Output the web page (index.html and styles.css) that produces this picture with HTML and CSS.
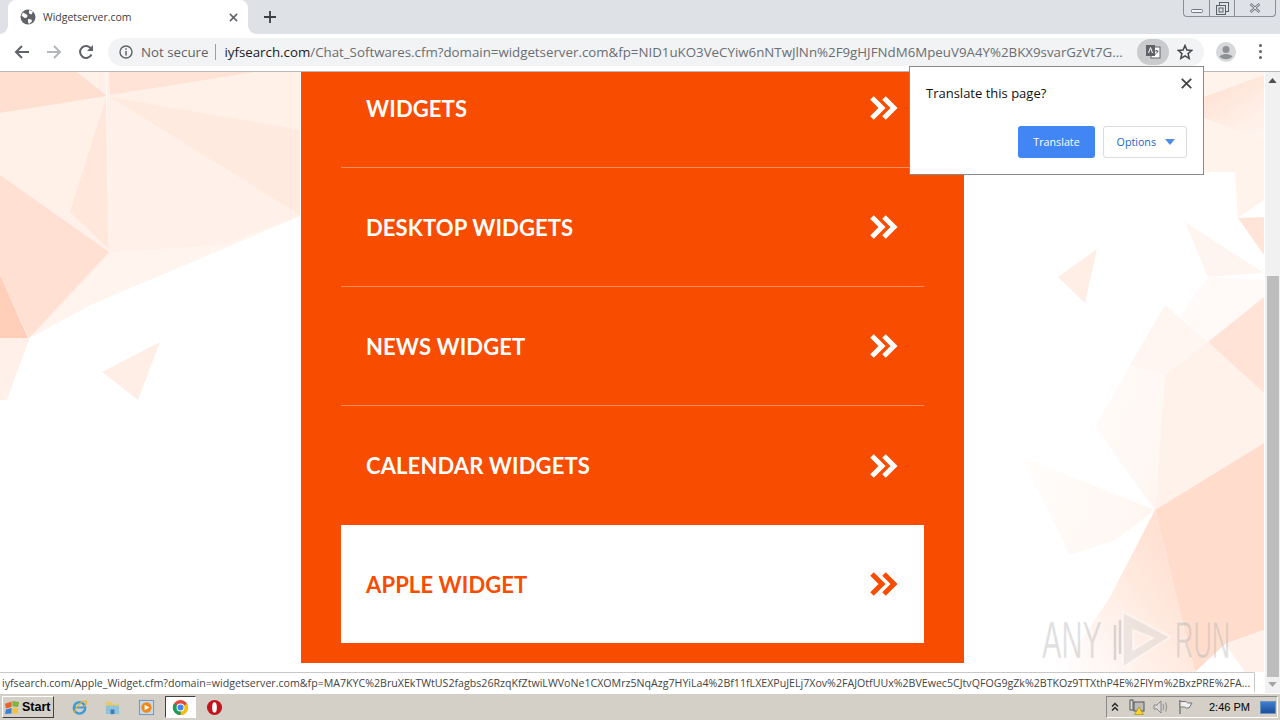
FILE: index.html
```html
<!DOCTYPE html>
<html lang="en">
<head>
<meta charset="utf-8">
<title>Widgetserver.com</title>
<link rel="stylesheet" href="styles.css">
</head>
<body>
<header class="browser">
  <div class="tabstrip">
    <div class="tab">
      <svg class="favicon" viewBox="0 0 16 16"><circle cx="8" cy="8" r="7.5" fill="#5f6368"/><path d="M3 3.500 7.500 6 7 8.500 4.500 9 1.500 6.500ZM9 1l4 1.500-1.500 3L9 4.500ZM8 10l3.500.5L12 12.500 9 15l-1-2Z" fill="#fff"/></svg>
      <span class="tab-title">Widgetserver.com</span>
      <svg class="tab-close" viewBox="0 0 10 10"><path d="M1 1l8 8M9 1l-8 8" stroke="#5f6368" stroke-width="1.700"/></svg>
    </div>
    <svg class="newtab" viewBox="0 0 12 12"><path d="M6 0v12M0 6h12" stroke="#3c4043" stroke-width="1.800"/></svg>
    <div class="winbtns">
      <span class="winbtn min"><svg viewBox="0 0 12 4" class="w-min"><rect x=".5" y=".5" width="11" height="3" rx="1" fill="#f4f5f7" stroke="#707680"/></svg></span>
      <span class="winbtn mid"><svg viewBox="0 0 13 13" class="w-max"><rect x="3.500" y=".5" width="9" height="9" fill="none" stroke="#5c6068"/><rect x=".5" y="3.500" width="9" height="9" fill="#dee1e6" stroke="#5c6068"/><rect x="3" y="6" width="4" height="4" fill="none" stroke="#5c6068"/></svg></span>
      <span class="winbtn close"><svg viewBox="0 0 12 10" class="w-close"><path d="M1.500 1l9 8M10.500 1l-9 8" stroke="#6d727a" stroke-width="2.400"/><path d="M1.500 1l9 8M10.500 1l-9 8" stroke="#e8eaed" stroke-width="1"/></svg></span>
    </div>
  </div>
  <div class="toolbar">
    <svg class="nav" viewBox="0 0 16 16"><path d="M15 8H2M8 2 2 8l6 6" fill="none" stroke="#5f6368" stroke-width="2"/></svg>
    <svg class="nav" viewBox="0 0 16 16"><path d="M1 8h13M8 2l6 6-6 6" fill="none" stroke="#b4b7bb" stroke-width="2"/></svg>
    <svg class="nav" viewBox="0 0 16 16"><path d="M13.500 10.500A6 6 0 1 1 13 4.500" fill="none" stroke="#5f6368" stroke-width="2"/><path d="M15 1v6H9z" fill="#5f6368"/></svg>
    <div class="omnibox">
      <svg class="info" viewBox="0 0 14 14"><circle cx="7" cy="7" r="6" fill="none" stroke="#5f6368" stroke-width="1.400"/><path d="M7 6v4.500M7 3.300v1.500" stroke="#5f6368" stroke-width="1.500"/></svg>
      <span class="secure">Not secure</span>
      <span class="pipe"></span>
      <span class="url"><b>iyfsearch.com</b>/Chat_Softwares.cfm?domain=widgetserver.com&amp;fp=NID1uKO3VeCYiw6nNTwJlNn%2F9gHJFNdM6MpeuV9A4Y%2BKX9svarGzVt7G...</span>
      <span class="translate-ico"><svg viewBox="0 0 16 16"><rect x="6" y="3" width="9" height="11" fill="#fff" stroke="#5f6368"/><rect x="1" y="1" width="9" height="11" fill="#5f6368"/><path d="M3.500 9 5.500 3.500 7.500 9" fill="none" stroke="#fff"/><path d="M9.500 7h4M11.500 6v1M12.500 7c-.3 2-1.500 3-3 3.500" fill="none" stroke="#5f6368"/></svg></span>
      <svg class="star" viewBox="0 0 16 16"><path d="M8 1.500 9.900 6 14.800 6.400 11.100 9.600 12.200 14.400 8 11.900 3.800 14.400 4.900 9.600 1.200 6.400 6.100 6Z" fill="none" stroke="#44474b" stroke-width="1.500"/></svg>
    </div>
    <span class="avatar"><svg viewBox="0 0 20 20"><circle cx="10" cy="10" r="10" fill="#d7d8da"/><circle cx="10" cy="7.500" r="3.500" fill="#8d9094"/><path d="M3.500 14.500c2-3.500 11-3.500 13 0-3 3.500-10 3.500-13 0Z" fill="#8d9094"/></svg></span>
    <span class="kebab"><i></i><i></i><i></i></span>
  </div>
</header>

<main class="viewport">
  <div class="page">
    <svg class="decor" viewBox="0 0 1265 601" aria-hidden="true">
      <defs>
        <linearGradient id="fadeA" gradientUnits="userSpaceOnUse" x1="1060" y1="672" x2="1185" y2="590">
          <stop offset="0" stop-color="#fff" /><stop offset="1" stop-color="#ffe2d4"/>
        </linearGradient>
        <linearGradient id="fadeB" gradientUnits="userSpaceOnUse" x1="1022" y1="457" x2="1155" y2="510">
          <stop offset="0" stop-color="#fffdfb"/><stop offset="1" stop-color="#fff6f1"/>
        </linearGradient>
        <linearGradient id="fadeC" gradientUnits="userSpaceOnUse" x1="1204" y1="95" x2="1240" y2="150">
          <stop offset="0" stop-color="#ffe3d6"/><stop offset="1" stop-color="#fff5ef"/>
        </linearGradient>
      </defs>
      <g transform="translate(0 -72)">
        <polygon fill="#fff1e9" points="0,72 300,72 300,216 220,250 90,305 30,337 7,400 0,400"/>
        <polygon fill="#fedfd0" points="0,72 77,72 107,96 0,113"/>
        <polygon fill="#fff0e8" points="77,72 105,72 107,95"/>
        <polygon fill="#fee3d6" points="109,72 255,72 110,95"/>
        <polygon fill="#fff0e8" points="110,97 300,130 300,72 255,72"/>
        <polygon fill="#ffeadf" points="110,97 300,130 300,215"/>
        <polygon fill="#fff0e8" points="0,113 106,98 72,215 0,175"/>
        <polygon fill="#ffe7db" points="106,98 110,250 70,212"/>
        <polygon fill="#ffe0d2" points="0,175 109,252 29,338 0,275"/>
        <polygon fill="#ffcfba" points="0,275 28,338 0,338"/>
        <polygon fill="#fff4ee" points="112,252 220,245 300,216 220,250 90,305 32,337"/>
        <polygon fill="#ffeee6" points="160,342 102,372 138,400"/>
        <polyline fill="none" stroke="#fff" stroke-opacity=".6" points="106,72 109,252"/>

        <polygon fill="#fff3ec" points="1204,72 1264,72 1264,200 1238,218 1235,172 1204,172"/>
        <polygon fill="url(#fadeC)" points="1204,97 1264,75 1264,140 1204,118"/>
        <polygon fill="#ffeee6" points="1058,277 1097,249 1085,303"/>
        <polygon fill="#fff5f0" points="1185,222 1208,277 1264,273"/>
        <polygon fill="#ffe4d7" points="1238,218 1264,217 1264,255"/>
        <polygon fill="#fffaf7" points="1208,277 1264,280 1264,297 1208,342 1180,316"/>
        <polygon fill="#fff6f1" points="1165,305 1208,342 1165,375 1130,365"/>
        <polygon fill="url(#fadeB)" points="1095,427 1130,365 1165,375 1155,510"/>
        <polygon fill="#fff2eb" points="1165,375 1208,342 1264,393 1264,443 1155,510"/>
        <polygon fill="#ffe3d6" points="1208,342 1264,297 1264,393"/>
        <polygon fill="url(#fadeB)" points="1022,457 1155,510 1115,540 1070,555"/>
        <polygon fill="#ffdccb" points="1155,510 1264,443 1264,630 1225,644 1195,672"/>
        <polygon fill="url(#fadeA)" points="1155,510 1195,672 1060,672 1110,597"/>
        <polygon fill="#fff1ea" points="1264,630 1225,644 1245,672 1264,672"/>
      </g>
    </svg>
    <nav class="panel">
      <a class="row"><span>WIDGETS</span><svg class="chev" viewBox="0 0 30 26"><path d="M3 3 13 13 3 23M15 3 25 13 15 23" fill="none" stroke="currentColor" stroke-width="5"/></svg></a>
      <a class="row"><span>DESKTOP WIDGETS</span><svg class="chev" viewBox="0 0 30 26"><path d="M3 3 13 13 3 23M15 3 25 13 15 23" fill="none" stroke="currentColor" stroke-width="5"/></svg></a>
      <a class="row"><span>NEWS WIDGET</span><svg class="chev" viewBox="0 0 30 26"><path d="M3 3 13 13 3 23M15 3 25 13 15 23" fill="none" stroke="currentColor" stroke-width="5"/></svg></a>
      <a class="row"><span>CALENDAR WIDGETS</span><svg class="chev" viewBox="0 0 30 26"><path d="M3 3 13 13 3 23M15 3 25 13 15 23" fill="none" stroke="currentColor" stroke-width="5"/></svg></a>
      <a class="row active"><span>APPLE WIDGET</span><svg class="chev" viewBox="0 0 30 26"><path d="M3 3 13 13 3 23M15 3 25 13 15 23" fill="none" stroke="currentColor" stroke-width="5"/></svg></a>
    </nav>
  </div>
  <div class="scrollbar">
    <svg class="arrow" viewBox="0 0 10 6"><path d="M5 0 10 6H0Z" fill="#505050"/></svg>
    <div class="thumb"></div>
    <svg class="arrow" viewBox="0 0 10 6"><path d="M5 6 10 0H0Z" fill="#a3a3a3"/></svg>
  </div>

  <div class="watermark">
    <span class="wm-text wm-any">ANY</span>
    <svg class="wm-logo" viewBox="0 0 60 64"><path d="M5 17V52M10 12V46" fill="none" stroke="#b4b4b4" stroke-opacity=".5" stroke-width="2.500"/><path d="M13 4 60 29 13 59ZM23 22 43 30 23 42Z" fill="#c8c8c8" fill-opacity=".3" fill-rule="evenodd" stroke="#fff" stroke-opacity=".5" stroke-width="2"/></svg>
    <span class="wm-text wm-run">RUN</span>
  </div>

  <aside class="bubble">
    <p class="bubble-title">Translate this page?</p>
    <svg class="bubble-close" viewBox="0 0 10 10"><path d="M.7.7l8.600 8.600M9.300.7.7 9.300" stroke="#444" stroke-width="1.600"/></svg>
    <div class="bubble-actions">
      <button class="btn primary">Translate</button>
      <button class="btn secondary">Options<i class="caret"></i></button>
    </div>
  </aside>

  <div class="status">iyfsearch.com/Apple_Widget.cfm?domain=widgetserver.com&amp;fp=MA7KYC%2BruXEkTWtUS2fagbs26RzqKfZtwiLWVoNe1CXOMrz5NqAzg7HYiLa4%2Bf11fLXEXPuJELj7Xov%2FAJOtfUUx%2BVEwec5CJtvQFOG9gZk%2BTKOz9TTXthP4E%2FlYm%2BxzPRE%2FA...</div>
</main>

<footer class="taskbar">
  <button class="start">
    <svg viewBox="0 0 18 16" class="start-flag"><path d="M1 4 8 1.500V7.500L2 9Z" fill="#e8632a"/><path d="M9 1 16 2 15 7.500 9 7Z" fill="#7fb43c"/><path d="M2 10 8 8.500V14.500L1 15Z" fill="#3b82d6"/><path d="M9 8.500 15 9 14.500 14.500 9 14Z" fill="#f2c230"/></svg>
    <span>Start</span>
  </button>
  <div class="quick">
    <span class="app"><svg viewBox="0 0 18 18"><circle cx="9" cy="9.500" r="6" fill="none" stroke="#3c9ad8" stroke-width="2.600"/><path d="M4 9h11" stroke="#3c9ad8" stroke-width="2"/><path d="M3 15C6 6 13 1 16 2c1.500 1 0 4-2 6" fill="none" stroke="#e6b530" stroke-width="1.300"/></svg></span>
    <span class="app"><svg viewBox="0 0 18 18"><path d="M2 3h6l1 2h7v11H2Z" fill="#e9c868"/><rect x="2" y="7" width="14" height="9" fill="#8fc3dc"/><rect x="7" y="11" width="4" height="5" fill="#3f7fb3"/></svg></span>
    <span class="app wmp"><svg viewBox="0 0 18 18"><rect x="1.500" y="1.500" width="15" height="15" fill="#c6d9ec" stroke="#6f93b8"/><circle cx="9" cy="9" r="5.500" fill="#ee8a1c"/><path d="M7 6l5 3-5 3Z" fill="#fff"/></svg></span>
    <span class="app current"><svg viewBox="0 0 18 18"><circle cx="9" cy="9" r="8" fill="#dd4b3e"/><path d="M9 9 16 5A8 8 0 0 1 9 17Z" fill="#f4c20d"/><path d="M9 9 9 17A8 8 0 0 1 2 5Z" fill="#1a9e55"/><circle cx="9" cy="9" r="4.200" fill="#fff"/><circle cx="9" cy="9" r="3.200" fill="#4285f4"/></svg></span>
    <span class="app"><svg viewBox="0 0 18 18"><circle cx="9" cy="9" r="8" fill="#c4141b"/><ellipse cx="9" cy="9" rx="2.500" ry="5.500" fill="#fff"/></svg></span>
  </div>
  <div class="tray">
    <svg class="tray-ico tri" viewBox="0 0 8 10"><path d="M1 4.500 4 1.500 7 4.500M1 8.500 4 5.500 7 8.500" fill="none" stroke="#222" stroke-width="1.400"/></svg>
    <svg class="tray-ico" viewBox="0 0 16 16"><rect x="1" y="1" width="3" height="10" fill="#ddd" stroke="#555"/><rect x="5" y="3" width="10" height="9" fill="#bbb" stroke="#555"/><path d="M10 8 14.500 15.500H5.500Z" fill="#f6d32d" stroke="#a08000" stroke-width=".6"/></svg>
    <svg class="tray-ico" viewBox="0 0 16 16"><path d="M1 6h3l4-4v12l-4-4H1Z" fill="#d8d8d8" stroke="#888"/><path d="M10 5c1 2 1 4 0 6M12.500 3.500c1.500 3 1.500 6 0 9" fill="none" stroke="#999" stroke-width="1.200"/></svg>
    <svg class="tray-ico" viewBox="0 0 16 16"><path d="M3 1v14" stroke="#777" stroke-width="1.400"/><path d="M3 2.500h6l1.500 1.500h4.500L12 9H9L7.500 8H3Z" fill="#eee" stroke="#777"/></svg>
    <span class="clock">2:46 PM</span>
    <span class="show-desktop"></span>
  </div>
</footer>
</body>
</html>
```
FILE: styles.css
```css
* { box-sizing: border-box; }
html, body { height: 100%; }
body {
  margin: 0;
  width: 1280px;
  height: 720px;
  overflow: hidden;
  display: flex;
  flex-direction: column;
  background: #fff;
  font-family: "Open Sans", "Liberation Sans", sans-serif;
}
svg { display: block; flex: none; }

/* Browser chrome */
.browser { flex: none; }
.tabstrip {
  height: 34px;
  background: #dee1e6;
  display: flex;
  align-items: center;
  padding-left: 8px;
}
.tab {
  position: relative;
  width: 240px;
  height: 34px;
  background: #fff;
  border-radius: 8px 8px 0 0;
  display: flex;
  align-items: center;
  padding: 0 6px 0 12px;
}
.tab::before, .tab::after {
  content: "";
  position: absolute;
  bottom: 0;
  width: 8px;
  height: 8px;
}
.tab::before { left: -8px; background: radial-gradient(circle at 0 0, #dee1e6 7.500px, #fff 8px); }
.tab::after { right: -8px; background: radial-gradient(circle at 100% 0, #dee1e6 7.500px, #fff 8px); }
.favicon { width: 16px; height: 16px; }
.tab-title { margin-left: 7px; font-size: 10.500px; color: #3c4043; flex: 1; }
.tab-close { width: 9px; height: 9px; margin-right: 4px; }
.newtab { width: 12px; height: 12px; margin-left: 16px; }
.winbtns {
  margin-left: auto;
  margin-right: 4px;
  align-self: flex-start;
  display: flex;
  width: 93px;
  height: 17px;
  border: 1px solid #8a8f96;
  border-top: 0;
  border-radius: 0 0 4px 4px;
}
.winbtn { display: flex; align-items: center; justify-content: center; }
.winbtn.min { width: 25px; }
.winbtn.mid { width: 26px; border-left: 1px solid #8a8f96; border-right: 1px solid #8a8f96; }
.winbtn.close { flex: 1; }
.w-min { width: 12px; height: 4px; margin-top: 5px; }
.w-max { width: 13px; height: 13px; }
.w-close { width: 12px; height: 10px; }

.toolbar {
  height: 38px;
  background: #fff;
  border-bottom: 1px solid #b9b9b9;
  display: flex;
  align-items: center;
  padding: 0 0 2px 14px;
  gap: 16px;
}
.nav { width: 16px; height: 16px; }
.omnibox {
  width: 1096px;
  height: 28px;
  margin-left: -2px;
  border-radius: 14px;
  background: #f1f3f4;
  display: flex;
  align-items: center;
  padding-left: 11px;
}
.info { width: 14px; height: 14px; }
.secure { margin-left: 8px; font-size: 13.300px; color: #5f6368; white-space: nowrap; }
.pipe { width: 1px; height: 16px; background: #9aa0a6; margin: 0 8px 0 7px; }
.url { width: 903px; font-size: 13.300px; color: #6a6e73; white-space: nowrap; }
.url b { font-weight: 400; color: #202124; }
.translate-ico {
  width: 32px; height: 26px; border-radius: 13px; background: #c9cbcd;
  display: flex; align-items: center; justify-content: center; margin-left: 10px; flex: none;
}
.translate-ico svg { width: 16px; height: 16px; }
.star { width: 16px; height: 16px; margin-left: 8px; }
.avatar { width: 20px; height: 20px; margin-left: -4px; }
.kebab { display: flex; flex-direction: column; gap: 3px; margin-left: 7px; }
.kebab i { width: 3px; height: 3px; background: #5f6368; border-radius: 50%; }

/* Page */
.viewport {
  flex: 1;
  min-height: 0;
  position: relative;
  display: flex;
}
.page {
  flex: 1;
  position: relative;
  background: #fff;
  overflow: hidden;
}
.decor { position: absolute; left: 0; top: 0; width: 1265px; height: 601px; }
.panel {
  position: relative;
  width: 663px;
  margin: -23px 0 0 301px;
  padding: 0 40px 20px;
  background: #f84c00;
  display: flex;
  flex-direction: column;
}
.row {
  height: 119px;
  padding: 0 25px;
  display: flex;
  align-items: center;
  justify-content: space-between;
  color: #fff;
  font-family: "Lato", "Open Sans", sans-serif;
  font-weight: 700;
  font-size: 22px;
  letter-spacing: .12px;
  border-bottom: 1px solid #fb8c5c;
}
.row:nth-child(4) { border-bottom: 0; }
.row.active { background: #fff; color: #f84c00; border-bottom: 0; height: 118px; }
.chev { width: 30px; height: 26px; }

.scrollbar {
  flex: none;
  width: 15px;
  background: #f1f1f1;
  display: flex;
  flex-direction: column;
  align-items: center;
}
.arrow { width: 9px; height: 5px; margin: 6px 0; }
.thumb { width: 12px; flex: 1; margin: 187px 0 -1px; background: #bdbdbd; }

.watermark {
  position: absolute;
  left: 1042px;
  top: 536px;
  width: 188px;
  height: 64px;
  display: flex;
  align-items: center;
}
.wm-text {
  font-family: "Liberation Sans", sans-serif;
  font-size: 51px;
  line-height: 1;
  transform-origin: left center;
  color: rgba(170,170,170,.4);
  -webkit-text-stroke: 1px rgba(255,255,255,.4);
  white-space: nowrap;
}
.wm-any { width: 68px; transform: scaleX(.57); }
.wm-run { width: 55px; margin-left: 5px; transform: scaleX(.5); }
.wm-logo { width: 60px; height: 64px; }

.bubble {
  position: absolute;
  left: 909px;
  top: -6px;
  width: 295px;
  height: 109px;
  background: #fff;
  border: 1px solid #8a8a8a;
  padding: 16px;
  display: flex;
  flex-direction: column;
}
.bubble-title { margin: 0; font-size: 13px; line-height: 20px; color: #111; }
.bubble-close { position: absolute; right: 11px; top: 11px; width: 11px; height: 11px; }
.bubble-actions { display: flex; justify-content: flex-end; gap: 8px; margin-top: 23px; }
.btn {
  height: 32px;
  font-family: inherit;
  font-size: 10.700px;
  border-radius: 3px;
  padding: 0;
}
.btn.primary { width: 77px; background: #4285f4; border: 0; color: #fff; }
.btn.secondary {
  width: 84px; background: #fff; border: 1px solid #dadce0; color: #1a66c8;
  display: flex; align-items: center; justify-content: flex-end; gap: 9px; padding-right: 11px;
}
.caret { width: 0; height: 0; border: 5px solid transparent; border-top: 6px solid #4a8ee8; border-bottom: 0; }

.status {
  position: absolute;
  left: 0;
  bottom: 1px;
  width: 1255px;
  height: 20px;
  background: #fff;
  border-top: 1px solid #c8c8c8;
  border-right: 1px solid #c8c8c8;
  border-radius: 0 2px 0 0;
  padding-left: 2px;
  font-size: 10.630px;
  line-height: 20px;
  color: #444;
  white-space: nowrap;
}

/* Taskbar */
.taskbar {
  flex: none;
  height: 27px;
  background: #d4d0c8;
  border-top: 1px solid #fff;
  display: flex;
  align-items: center;
  padding: 0 2px;
}
.start {
  width: 52px;
  height: 22px;
  padding: 0 0 0 1px;
  background: #d4d0c8;
  border: 1px solid;
  border-color: #fff #404040 #404040 #fff;
  display: flex;
  align-items: center;
  gap: 1px;
  font-family: "Liberation Sans", sans-serif;
  font-weight: 700;
  font-size: 12.500px;
  color: #000;
}
.start-flag { width: 17px; height: 15px; }
.quick { display: flex; align-items: center; margin-left: 14px; gap: 11px; }
.app { width: 22px; height: 22px; display: flex; align-items: center; justify-content: center; }
.app svg { width: 17px; height: 17px; }
.app.wmp { margin-left: 1px; }
.app.current {
  width: 31px; margin: 0 -4px 0 -3px; background: #fff;
  border: 1px solid; border-color: #404040 #fff #fff #404040;
}
.tray {
  margin-left: auto;
  width: 172px;
  height: 22px;
  border: 1px solid;
  border-color: #8a8a8a #fff #fff #8a8a8a;
  display: flex;
  align-items: center;
  padding-left: 4px;
  gap: 8px;
}
.tray-ico { width: 16px; height: 16px; }
.tri { width: 8px; height: 10px; margin-right: 2px; }
.clock {
  margin-left: 8px;
  font-family: "Liberation Sans", sans-serif;
  font-size: 11px;
  color: #000;
  white-space: nowrap;
}
.show-desktop {
  width: 16px; height: 13px; margin-left: auto; margin-right: 1px;
  background: linear-gradient(#3d7fcf, #1c4f9c);
  border: 1px solid #6e93c0;
}
```
